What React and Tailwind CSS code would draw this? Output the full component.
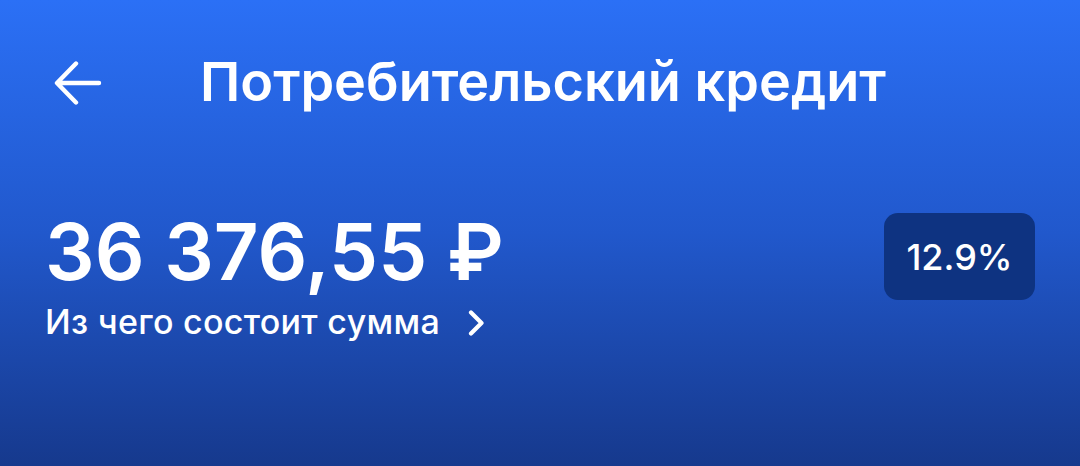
function BackArrow() {
  return (
    <svg width="48" height="46" viewBox="0 0 48 46" fill="none" stroke="white" strokeWidth="4.4" strokeLinecap="round" strokeLinejoin="round">
      <path d="M45 23H3.5M22 3.5 3 23l19 19.5" />
    </svg>
  )
}

function Chevron() {
  return (
    <svg width="17" height="26" viewBox="0 0 17 26" fill="none" stroke="white" strokeWidth="4.2" strokeLinecap="round" strokeLinejoin="round">
      <path d="M3 2.5 13.5 13 3 23.5" />
    </svg>
  )
}

function Header() {
  return (
    <div className="flex h-[166px] items-center pl-[54px]">
      <button type="button" className="flex h-[56px] w-[56px] items-center justify-start">
        <BackArrow />
      </button>
      <h1 className="ml-[90px] -mt-[2px] text-[54px] font-semibold leading-none tracking-normal text-white">
        Потребительский кредит
      </h1>
    </div>
  )
}

function Amount() {
  return (
    <div className="flex items-start justify-between pl-[45px] pr-[45px] pt-[47px]">
      <div>
        <p className="text-[78px] font-semibold leading-none text-white">36 376,55 ₽</p>
        <button type="button" className="mt-[14px] flex items-center text-white">
          <span className="text-[34px] font-medium leading-none tracking-[0.3px]">Из чего состоит сумма</span>
          <span className="ml-[28px] mt-[2px]">
            <Chevron />
          </span>
        </button>
      </div>
      <div className="flex h-[87px] w-[151px] items-center justify-center rounded-[14px] bg-[#0e3381]">
        <span className="text-[36px] font-medium leading-none text-white">12.9%</span>
      </div>
    </div>
  )
}

export default function App() {
  return (
    <div
      className="h-[466px] w-[1080px] overflow-hidden bg-gradient-to-b from-[#2b70f6] via-[#2158cc] to-[#16398d]"
      style={{ fontFamily: 'Inter, "Noto Sans", sans-serif' }}
    >
      <Header />
      <Amount />
    </div>
  )
}
